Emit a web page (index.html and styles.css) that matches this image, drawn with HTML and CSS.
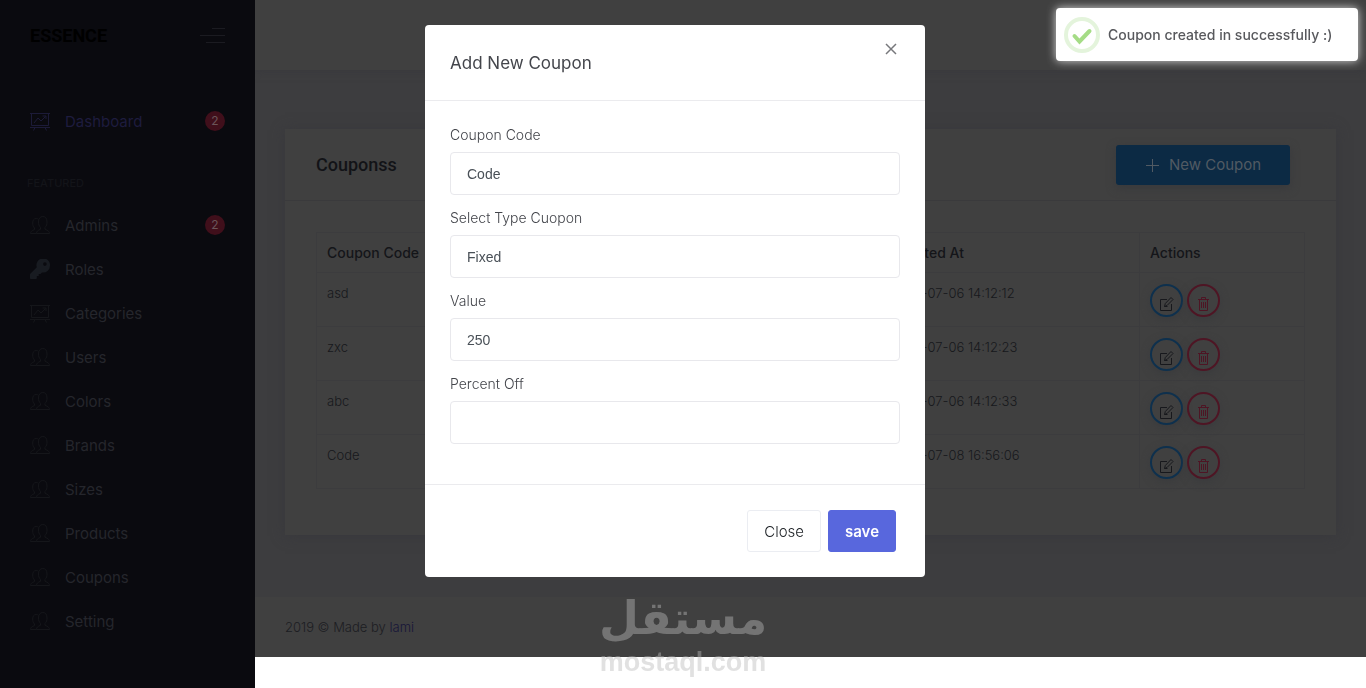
FILE: index.html
```html
<!DOCTYPE html>
<html lang="en">
<head>
  <meta charset="UTF-8">
  <meta name="viewport" content="width=device-width, initial-scale=1.0">
  <title>Essence | Coupons</title>
  <link rel="stylesheet" href="styles.css">
</head>
<body>
  <!-- Icons -->
  <svg class="sprite" xmlns="http://www.w3.org/2000/svg">
    <symbol id="icon-board" viewBox="0 0 20 20">
      <path d="M0 2.500h20M1.500 2.500v12h17v-12M0 16.500h20M5 16.500l-1.500 3M15 16.500l1.500 3M4 12l4-5 3 3 4.500-4.500M12.500 5h3.500v3"/>
    </symbol>
    <symbol id="icon-users" viewBox="0 0 20 20">
      <path d="M6.500 18.500h13c0-2-1.500-3-4.500-4.200v-2c1.600-1.400 2-3 2-5.300C17 3.500 15.500 1.500 12.800 1.500S8.500 3.500 8.500 7c0 2.300.5 3.900 2 5.300v2c-2.600 1-4 2-4 4.200zM6.500 18.500h-6c0-2 1.500-3 4-3.900v-1.600C3 11.600 2.700 10 2.700 8c0-3 1.300-4.500 3.500-4.500 1 0 1.800.3 2.300.9"/>
    </symbol>
    <symbol id="icon-key" viewBox="0 0 20 20">
      <path fill="currentColor" fill-rule="evenodd" stroke="none" d="M20 6.800a6.800 6.800 0 0 1-8 6.600L10.500 15H8.700v2H6.800v2c0 .6-.4 1-1 1H1c-.6 0-1-.4-1-1v-3.500c0-.3.100-.5.300-.7l6.500-6.500A6.800 6.800 0 1 1 20 6.800zM14.900 3.300a1.800 1.800 0 1 0 0 3.600 1.800 1.800 0 0 0 0-3.600z"/>
    </symbol>
    <symbol id="icon-edit" viewBox="0 0 15 15">
      <path d="M8 3.500H1.500v11h11V8M5.500 10.500l.8-3L12 1.500l2 2-6 6zM5.500 10.500h3"/>
    </symbol>
    <symbol id="icon-trash" viewBox="0 0 15 15">
      <path d="M2 3.500h11M5.500 3.500v-2h4v2M3.500 3.500v11h8v-11M5.500 6v6M7.500 6v6M9.500 6v6"/>
    </symbol>
  </svg>

  <!-- Sidebar -->
  <aside class="sidebar">
    <div class="brand">
      <a href="#" class="logo">ESSENCE</a>
      <button class="toggle" type="button" aria-label="Toggle menu">
        <span></span><span></span><span></span>
      </button>
    </div>
    <nav>
      <a href="#" class="nav-link active"><svg class="icon"><use href="#icon-board"/></svg>Dashboard<span class="badge">2</span></a>
      <h4 class="nav-title">FEATURED</h4>
      <a href="#" class="nav-link"><svg class="icon"><use href="#icon-users"/></svg>Admins<span class="badge">2</span></a>
      <a href="#" class="nav-link"><svg class="icon key"><use href="#icon-key"/></svg>Roles</a>
      <a href="#" class="nav-link"><svg class="icon"><use href="#icon-board"/></svg>Categories</a>
      <a href="#" class="nav-link"><svg class="icon"><use href="#icon-users"/></svg>Users</a>
      <a href="#" class="nav-link"><svg class="icon"><use href="#icon-users"/></svg>Colors</a>
      <a href="#" class="nav-link"><svg class="icon"><use href="#icon-users"/></svg>Brands</a>
      <a href="#" class="nav-link"><svg class="icon"><use href="#icon-users"/></svg>Sizes</a>
      <a href="#" class="nav-link"><svg class="icon"><use href="#icon-users"/></svg>Products</a>
      <a href="#" class="nav-link"><svg class="icon"><use href="#icon-users"/></svg>Coupons</a>
      <a href="#" class="nav-link"><svg class="icon"><use href="#icon-users"/></svg>Setting</a>
    </nav>
  </aside>

  <!-- Page -->
  <div class="page">
    <header class="topbar"></header>
    <main class="content">
      <section class="card">
        <div class="card-header">
          <h3>Couponss</h3>
          <button class="btn-new" type="button">
            <svg viewBox="0 0 14 14"><path d="M7.500 1v13M1 7.500h13"/></svg>New Coupon
          </button>
        </div>
        <div class="card-body">
          <table>
            <colgroup>
              <col class="col-code">
              <col>
              <col>
              <col>
              <col class="col-date">
              <col class="col-actions">
            </colgroup>
            <thead>
              <tr><th>Coupon Code</th><th></th><th></th><th></th><th>Created At</th><th>Actions</th></tr>
            </thead>
            <tbody>
              <tr>
                <td>asd</td><td></td><td></td><td></td><td>2019-07-06 14:12:12</td>
                <td>
                  <div class="actions">
                    <button class="round edit" type="button" aria-label="Edit"><svg><use href="#icon-edit"/></svg></button>
                    <button class="round delete" type="button" aria-label="Delete"><svg><use href="#icon-trash"/></svg></button>
                  </div>
                </td>
              </tr>
              <tr>
                <td>zxc</td><td></td><td></td><td></td><td>2019-07-06 14:12:23</td>
                <td>
                  <div class="actions">
                    <button class="round edit" type="button" aria-label="Edit"><svg><use href="#icon-edit"/></svg></button>
                    <button class="round delete" type="button" aria-label="Delete"><svg><use href="#icon-trash"/></svg></button>
                  </div>
                </td>
              </tr>
              <tr>
                <td>abc</td><td></td><td></td><td></td><td>2019-07-06 14:12:33</td>
                <td>
                  <div class="actions">
                    <button class="round edit" type="button" aria-label="Edit"><svg><use href="#icon-edit"/></svg></button>
                    <button class="round delete" type="button" aria-label="Delete"><svg><use href="#icon-trash"/></svg></button>
                  </div>
                </td>
              </tr>
              <tr>
                <td>Code</td><td></td><td></td><td></td><td>2019-07-08 16:56:06</td>
                <td>
                  <div class="actions">
                    <button class="round edit" type="button" aria-label="Edit"><svg><use href="#icon-edit"/></svg></button>
                    <button class="round delete" type="button" aria-label="Delete"><svg><use href="#icon-trash"/></svg></button>
                  </div>
                </td>
              </tr>
            </tbody>
          </table>
        </div>
      </section>
    </main>
    <footer class="footer">2019 © Made by <a href="#">lami</a></footer>
  </div>

  <!-- Add coupon modal -->
  <div class="modal">
    <form class="modal-dialog" role="dialog" aria-labelledby="modal-title">
      <div class="modal-header">
        <h5 id="modal-title">Add New Coupon</h5>
        <button class="modal-close" type="button" aria-label="Dismiss">
          <svg viewBox="0 0 12 12"><path d="M1 1l10 10M11 1L1 11"/></svg>
        </button>
      </div>
      <div class="modal-body">
        <div class="form-group">
          <label for="code">Coupon Code</label>
          <input type="text" id="code" value="Code">
        </div>
        <div class="form-group">
          <label for="type">Select Type Cuopon</label>
          <select id="type">
            <option>Fixed</option>
            <option>Percent</option>
          </select>
        </div>
        <div class="form-group">
          <label for="value">Value</label>
          <input type="text" id="value" value="250">
        </div>
        <div class="form-group">
          <label for="percent">Percent Off</label>
          <input type="text" id="percent">
        </div>
      </div>
      <div class="modal-footer">
        <button class="btn btn-light" type="button">Close</button>
        <button class="btn btn-save" type="submit">save</button>
      </div>
    </form>
  </div>

  <!-- Toast -->
  <div class="toast" role="status">
    <svg viewBox="0 0 36 36">
      <circle cx="18" cy="18" r="16" fill="none" stroke="#e4f4dc" stroke-width="4"/>
      <path d="M10.500 19l5 5.500 10-10.500" fill="none" stroke="#a5dc86" stroke-width="4" stroke-linecap="round"/>
    </svg>
    <span>Coupon created in successfully :)</span>
  </div>

  <!-- Watermark -->
  <div class="watermark">
    <span class="watermark-ar" lang="ar" dir="rtl">مستقل</span>
    <span class="watermark-en">mostaql.com</span>
  </div>
</body>
</html>
```
FILE: styles.css
```css
* {
  box-sizing: border-box;
}

body {
  margin: 0;
  background: #fff;
  color: #1a1b1f;
  font-family: Inter, "Open Sans", sans-serif;
  font-size: 13px;
  font-weight: 300;
}

h3, h4, h5 {
  margin: 0;
}

a {
  text-decoration: none;
}

button {
  font-family: inherit;
  cursor: pointer;
}

svg {
  fill: none;
  stroke: currentColor;
}

.sprite {
  display: none;
}

/* Sidebar */
.sidebar {
  position: fixed;
  top: 0;
  bottom: 0;
  left: 0;
  width: 255px;
  background: #0a0a0f;
}

.brand {
  display: flex;
  align-items: center;
  justify-content: space-between;
  height: 70px;
  padding: 0 30px;
}

.logo {
  color: #000;
  font-family: Roboto, sans-serif;
  font-size: 18px;
  font-weight: 700;
}

.toggle {
  display: flex;
  flex-direction: column;
  align-items: flex-end;
  gap: 6px;
  padding: 0;
  border: 0;
  background: none;
}

.toggle span {
  width: 25px;
  height: 1px;
  background: #1b1b21;
}

.toggle span:first-child {
  width: 13px;
}

.toggle span:last-child {
  width: 19px;
}

.sidebar nav {
  padding-top: 29px;
}

.nav-link {
  display: flex;
  align-items: center;
  height: 44px;
  padding: 0 30px;
  color: #25262c;
  font-size: 15px;
  font-weight: 400;
}

.nav-link.active {
  color: #1e1c3e;
}

.icon {
  width: 20px;
  height: 20px;
  margin-right: 15px;
  color: #15161a;
}

.icon.key {
  color: #181b21;
}

.active .icon {
  color: #1c1b38;
}

.badge {
  width: 20px;
  height: 20px;
  margin-left: auto;
  border-radius: 50%;
  background: #400f1b;
  color: #6b5559;
  font-size: 12px;
  line-height: 20px;
  text-align: center;
}

.nav-title {
  height: 60px;
  padding-left: 27px;
  color: #131419;
  font-size: 11px;
  font-weight: 500;
  line-height: 80px;
}

/* Page */
.page {
  margin-left: 255px;
  background: #3d3d3f;
}

.topbar {
  height: 70px;
  background: #404040;
  box-shadow: 0 1px 8px #39393d;
}

.content {
  padding: 59px 30px 62px;
}

.card {
  background: #404040;
  box-shadow: 0 1px 12px #38383c;
}

.card-header {
  display: flex;
  align-items: center;
  justify-content: space-between;
  height: 72px;
  padding: 0 46px 0 31px;
  border-bottom: 1px solid #3a3a3c;
}

.card-header h3 {
  color: #121317;
  font-family: Roboto, sans-serif;
  font-size: 18px;
  font-weight: 500;
}

.btn-new {
  display: flex;
  align-items: center;
  justify-content: center;
  gap: 10px;
  width: 174px;
  height: 40px;
  border: 0;
  border-radius: 3px;
  background: #0c2a44;
  box-shadow: 0 3px 10px #38393c;
  color: #515a63;
  font-size: 15px;
}

.btn-new svg {
  width: 14px;
  height: 14px;
}

.card-body {
  padding: 31px 31px 46px;
}

table {
  width: 100%;
  border-collapse: collapse;
  table-layout: fixed;
}

.col-code {
  width: 14%;
}

.col-date {
  width: 26%;
}

.col-actions {
  width: 165px;
}

th,
td {
  height: 54px;
  padding: 11px 10px 0;
  border: 1px solid #3c3c3e;
  color: #17181c;
  line-height: 18px;
  text-align: left;
  vertical-align: top;
}

th {
  height: 40px;
  padding: 0 10px;
  color: #141519;
  font-size: 14px;
  font-weight: 500;
  vertical-align: middle;
}

th:not(:last-child),
td:not(:last-child) {
  border-right: 0;
}

th:nth-child(n+2):nth-child(-n+5),
td:nth-child(n+2):nth-child(-n+5) {
  border-left: 0;
}

.actions {
  display: flex;
  gap: 4px;
}

.round {
  display: flex;
  align-items: center;
  justify-content: center;
  width: 33px;
  height: 33px;
  padding: 6px 0 0;
  border: 2px solid #0e304d;
  border-radius: 50%;
  background: none;
  box-shadow: 0 3px 8px #3a3b3d;
  color: #17181c;
}

.round svg {
  width: 15px;
  height: 15px;
}

.round.delete {
  border-color: #4e1524;
  color: #4e1524;
}

.footer {
  height: 60px;
  padding: 0 30px;
  background: #404040;
  color: #1c1d22;
  line-height: 60px;
}

.footer a {
  color: #171538;
}

/* Modal */
.modal {
  position: absolute;
  top: 0;
  left: 0;
  width: 100%;
  padding: 25px 16px 25px 0;
}

.modal-dialog {
  max-width: 500px;
  margin: 0 auto;
  border-radius: 4px;
  background: #fff;
}

.modal-header {
  display: flex;
  align-items: center;
  justify-content: space-between;
  height: 76px;
  padding: 0 25px;
  border-bottom: 1px solid #ebebee;
}

.modal-header h5 {
  color: #43454b;
  font-size: 17px;
  font-weight: 400;
}

.modal-close {
  align-self: flex-start;
  margin-top: 18px;
  padding: 0 3px;
  border: 0;
  background: none;
  color: #77787c;
}

.modal-close svg {
  display: block;
  width: 12px;
  height: 12px;
  stroke-width: 1.5;
}

.modal-body {
  padding: 25px 25px 26px;
}

.form-group {
  margin-bottom: 14px;
}

.form-group label {
  display: block;
  margin-bottom: 8px;
  color: #43454b;
  font-size: 14px;
  line-height: 18px;
}

.form-group input,
.form-group select {
  display: block;
  width: 100%;
  height: 43px;
  padding: 0 16px;
  border: 1px solid #e8e8ec;
  border-radius: 4px;
  background: #fff;
  color: #495057;
  font-family: "Liberation Sans", Arial, sans-serif;
  font-size: 14px;
  appearance: none;
}

.modal-footer {
  display: flex;
  justify-content: flex-end;
  gap: 7px;
  padding: 25px 29px 25px 25px;
  border-top: 1px solid #ebebee;
}

.btn {
  height: 42px;
  padding: 0 16px;
  border: 1px solid #ebedf2;
  border-radius: 3px;
  background: #fff;
  color: #212529;
  font-size: 15px;
  font-weight: 300;
}

.btn-save {
  border-color: #5867dd;
  background: #5867dd;
  color: #fff;
  font-weight: 600;
}

/* Toast */
.toast {
  position: fixed;
  top: 8px;
  right: 8px;
  display: flex;
  align-items: center;
  gap: 8px;
  width: 302px;
  height: 53px;
  padding: 0 8px;
  border-radius: 4px;
  background: #fff;
  box-shadow: 0 0 10px #d9d9d9;
  color: #58595d;
  font-size: 14px;
  font-weight: 500;
  white-space: nowrap;
}

.toast svg {
  flex: none;
  width: 36px;
  height: 36px;
}

/* Watermark */
.watermark {
  position: fixed;
  bottom: 10px;
  left: 50%;
  display: flex;
  flex-direction: column;
  align-items: center;
  color: #bababa;
  font-weight: 700;
  opacity: 0.43;
  transform: translateX(-50%);
}

.watermark-ar {
  font-family: "DejaVu Sans", sans-serif;
  font-size: 46px;
  line-height: 56px;
}

.watermark-en {
  font-family: "Liberation Sans", Arial, sans-serif;
  font-size: 27px;
  line-height: 32px;
}
```
